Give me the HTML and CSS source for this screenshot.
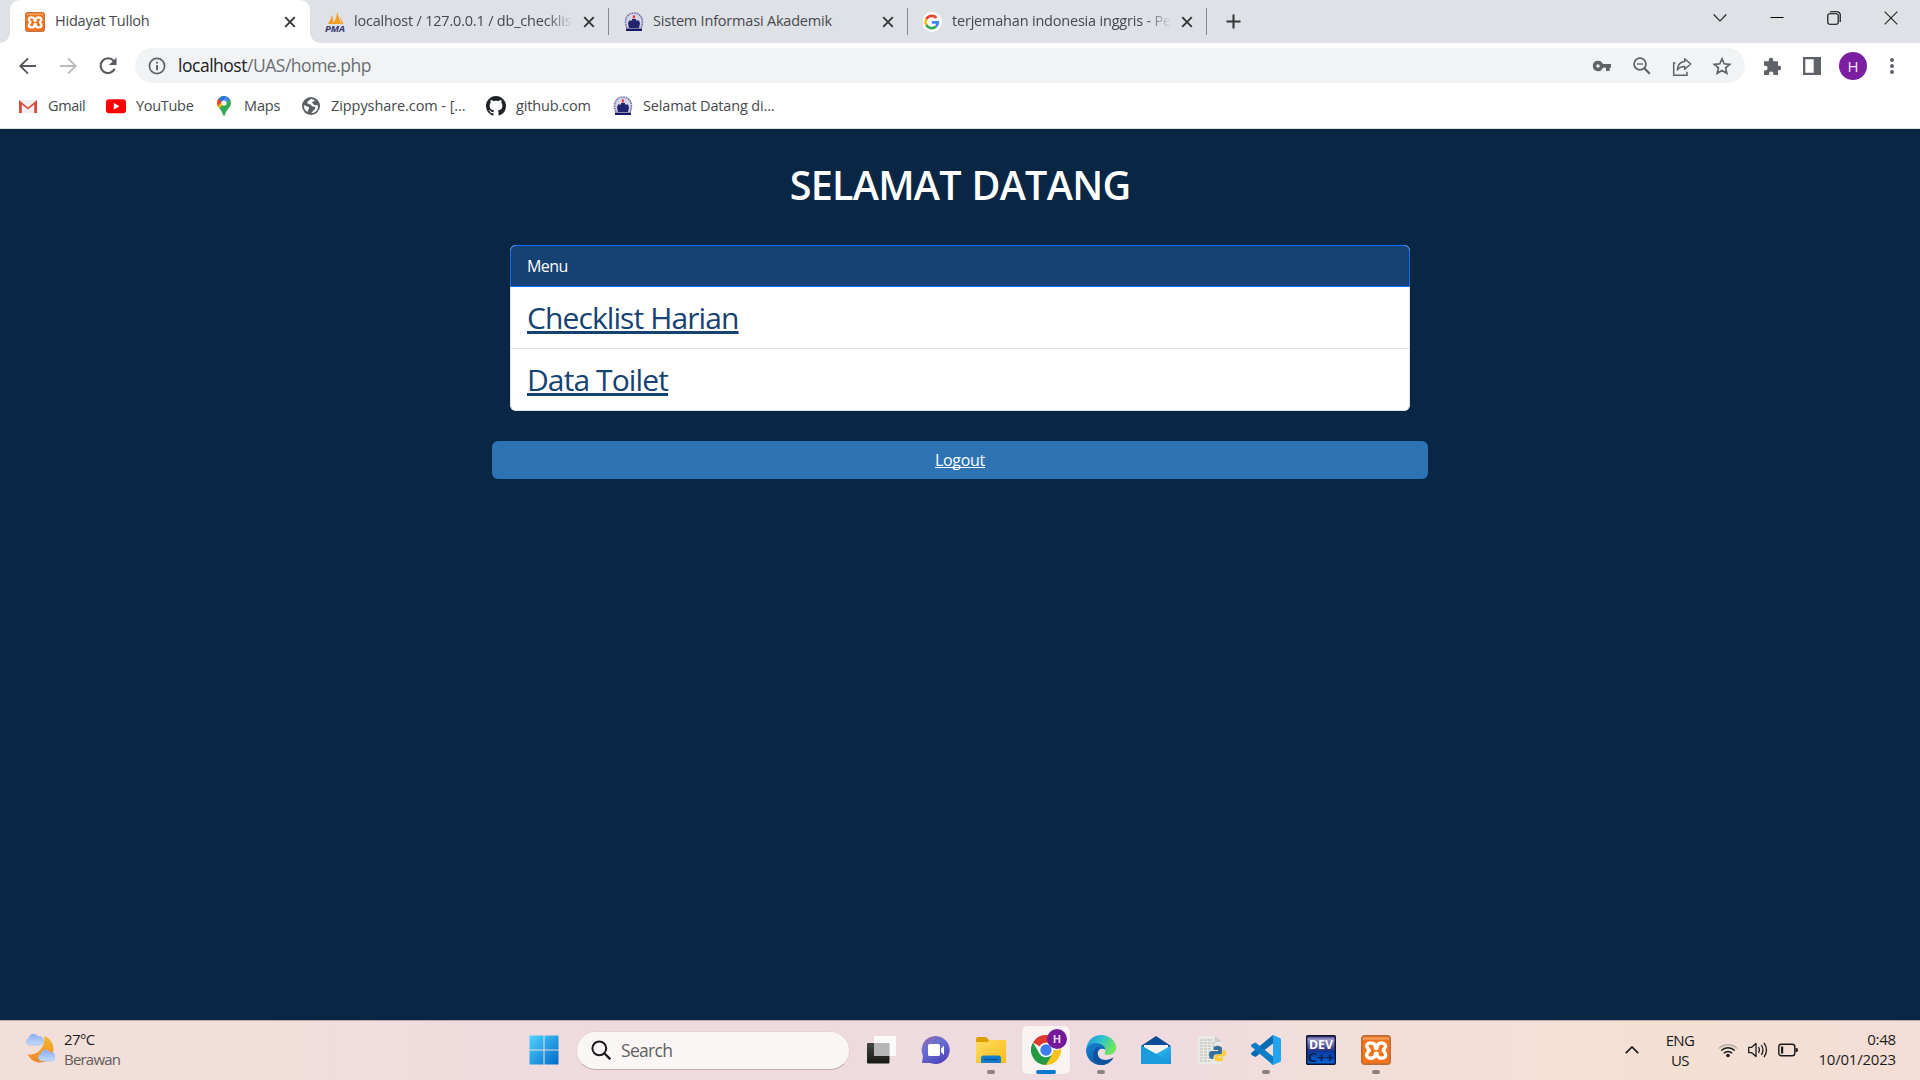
FILE: index.html
```html
<!DOCTYPE html>
<html lang="id">
<head>
<meta charset="utf-8">
<title>Hidayat Tulloh</title>
<link rel="stylesheet" href="styles.css">
</head>
<body>
<svg class="defs" width="0" height="0" aria-hidden="true">
  <defs>
    <linearGradient id="win" x1="0" y1="0" x2="1" y2="1"><stop offset="0" stop-color="#4fd4ff"/><stop offset="1" stop-color="#0069c8"/></linearGradient>
    <linearGradient id="moon" x1="0" y1="0" x2="0" y2="1"><stop offset="0" stop-color="#f4bb2f"/><stop offset="1" stop-color="#ee8424"/></linearGradient>
    <linearGradient id="cloud" x1="0" y1="0" x2="0" y2="1"><stop offset="0" stop-color="#86abef"/><stop offset="1" stop-color="#c4dcfc"/></linearGradient>
    <linearGradient id="tvb" x1="0" y1="0" x2="0" y2="1"><stop offset="0" stop-color="#444643"/><stop offset="1" stop-color="#171816"/></linearGradient>
    <linearGradient id="chat" x1="0" y1="0" x2=".6" y2="1"><stop offset="0" stop-color="#9a65a8"/><stop offset=".45" stop-color="#6570d2"/><stop offset="1" stop-color="#5147bd"/></linearGradient>
    <linearGradient id="fold" x1="0" y1="0" x2="1" y2="1"><stop offset="0" stop-color="#ffdc60"/><stop offset="1" stop-color="#fbbd18"/></linearGradient>
    <linearGradient id="edgetop" x1="0" y1="0" x2="1" y2=".4"><stop offset="0" stop-color="#1790dc"/><stop offset=".5" stop-color="#2fc0d2"/><stop offset="1" stop-color="#6be75c"/></linearGradient>
    <linearGradient id="edgelow" x1="0" y1="0" x2="1" y2="1"><stop offset="0" stop-color="#1583d6"/><stop offset="1" stop-color="#0b4a94"/></linearGradient>
    <linearGradient id="mail" x1="0" y1="0" x2="1" y2="1"><stop offset="0" stop-color="#3bd1f7"/><stop offset="1" stop-color="#168fd9"/></linearGradient>
    <linearGradient id="devbg" x1="0" y1="0" x2="0" y2="1"><stop offset="0" stop-color="#24215f"/><stop offset=".12" stop-color="#9c99cf"/><stop offset=".5" stop-color="#32347c"/><stop offset=".56" stop-color="#073b9d"/><stop offset="1" stop-color="#0866dc"/></linearGradient>
    <symbol id="xampp" viewBox="0 0 30 30">
      <rect x=".7" y=".7" width="28.6" height="28.6" rx="3" fill="#f0741d" stroke="#b96b38" stroke-width="1.4"/>
      <path d="M2 2.4h26v2.2H2z" fill="#f6a05f"/>
      <path d="M10.500 8C6 7.700 5 10.500 6.300 12.500L8.300 15.300 6.300 18.200C4.700 21 6.500 23.300 10 23.200c3.700 0 4.500-2.200 4.500-5h1.500c0 2.800.8 5 4.500 5 3.500 0 5.200-2.200 3.700-5L22.200 15.300l2-2.800C25.300 10.500 24 8 20 8c-3.300 0-4 2.200-4 5.200h-1.500C14.500 10.200 13.800 8 10.500 8z" fill="none" stroke="#fff" stroke-width="3.400" stroke-linejoin="round"/>
    </symbol>
    <symbol id="ship" viewBox="0 0 20 20">
      <path d="M3 16C-1 7 4 1 10 1s11 6 7 15" fill="#d5d6e7" stroke="#7d7ea9" stroke-width="1.700" stroke-dasharray="1.800 .7"/>
      <path d="M5 8.500h3V7h4v1.500h3l1 3-1 4.500H5l-1-4.500z" fill="#23246e"/>
      <path d="M2 16.500h16V19H2z" fill="#151769"/>
      <path d="M10 2.500l1.200 2.200L10 7.500 8.500 5z" fill="#e33"/>
    </symbol>
    <symbol id="close" viewBox="0 0 12 12"><path d="M1.200 1.200l9.600 9.600M10.800 1.200L1.200 10.800" stroke="#34373a" stroke-width="1.900"/></symbol>
    <symbol id="arrow" viewBox="0 0 20 20"><path d="M18 10H3M10 2.300L2.300 10l7.700 7.700" fill="none" stroke="currentColor" stroke-width="1.900"/></symbol>
  </defs>
</svg>

<div class="screen">
  <header class="tabstrip">
    <div class="tab tab-active">
      <svg class="favicon"><use href="#xampp"/></svg>
      <span class="tab-title">Hidayat Tulloh</span>
      <svg class="tab-close"><use href="#close"/></svg>
    </div>
    <div class="tab">
      <svg class="favicon" viewBox="0 0 20 20"><path d="M3 12Q6 7 7 3l2 9zM8 12Q12 6 12 0l4 12zM14.500 4l4 8h-2z" fill="#f89c1c"/><text class="pma" x="0" y="19.500" textLength="20" lengthAdjust="spacingAndGlyphs">PMA</text></svg>
      <span class="tab-title fade">localhost / 127.0.0.1 / db_checklist</span>
      <svg class="tab-close"><use href="#close"/></svg>
    </div>
    <div class="tab">
      <svg class="favicon"><use href="#ship"/></svg>
      <span class="tab-title">Sistem Informasi Akademik</span>
      <svg class="tab-close"><use href="#close"/></svg>
    </div>
    <div class="tab">
      <svg class="favicon" viewBox="0 0 20 20"><circle cx="9" cy="10" r="10" fill="#fff"/><g transform="translate(-1.200)" fill="none" stroke-width="2.700"><path d="M14.600 5.900A6.200 6.200 0 0 0 4.500 7.200" stroke="#ea4335"/><path d="M4.500 7.200a6.200 6.200 0 0 0 0 5.600" stroke="#fbbc05"/><path d="M4.500 12.800a6.200 6.200 0 0 0 9.700 1.700" stroke="#34a853"/><path d="M14.200 14.500A6.100 6.100 0 0 0 16.100 10.300H10" stroke="#4285f4"/></g></svg>
      <span class="tab-title fade">terjemahan indonesia inggris - Pe</span>
      <svg class="tab-close"><use href="#close"/></svg>
    </div>
    <svg class="newtab" viewBox="0 0 16 16"><path d="M8 .5v15M.5 8h15" stroke="#333639" stroke-width="2.200"/></svg>
    <div class="window-buttons">
      <svg viewBox="0 0 14 14"><path d="M.7 3.500L7 10l6.300-6.500" fill="none" stroke="#222" stroke-width="1.100"/></svg>
      <svg viewBox="0 0 14 14"><path d="M.5 6.500h13" stroke="#000" stroke-width="1"/></svg>
      <svg viewBox="0 0 14 14"><g fill="none" stroke="#000" stroke-width="1.100"><rect x=".8" y="2.800" width="10.400" height="10.400" rx="1.800"/><path d="M3 .8h7.400a2.800 2.800 0 0 1 2.800 2.800V11"/></g></svg>
      <svg viewBox="0 0 14 14"><path d="M.7.7l12.600 12.600M13.300.7L.7 13.300" stroke="#222" stroke-width="1.100"/></svg>
    </div>
  </header>

  <div class="toolbar">
    <svg class="nav"><use href="#arrow"/></svg>
    <svg class="nav nav-forward"><use href="#arrow"/></svg>
    <svg class="nav" viewBox="0 0 20 20"><path d="M16.700 12.800A7.400 7.400 0 1 1 15.700 5" fill="none" stroke="#55595d" stroke-width="2.100"/><path d="M18.500 1.500v7.500H11z" fill="#55595d"/></svg>
    <div class="omnibox">
      <svg class="info" viewBox="0 0 18 18"><circle cx="9" cy="9" r="7.600" fill="none" stroke="#5f6368" stroke-width="1.700"/><path d="M9 8v5.200M9 4.700v1.900" stroke="#5f6368" stroke-width="1.900"/></svg>
      <span class="url"><span class="host">localhost</span>/UAS/home.php</span>
      <div class="omni-actions">
        <svg viewBox="0 0 20 20"><path d="M6 4.700a5.200 5.200 0 0 1 4.900 3.400H19v3.600h-1.300v3.200H14v-3.200h-3.100A5.200 5.200 0 1 1 6 4.700zm0 3.500a1.700 1.700 0 1 0 0 3.500 1.700 1.700 0 0 0 0-3.500z" fill="#5f6368" fill-rule="evenodd"/></svg>
        <svg viewBox="0 0 20 20"><g fill="none" stroke="#5f6368"><circle cx="8" cy="8" r="5.900" stroke-width="1.800"/><path d="M12.300 12.300l5.500 5.500" stroke-width="2.200"/><path d="M5 8h6" stroke-width="1.400"/></g></svg>
        <svg viewBox="0 0 20 20"><g fill="none" stroke="#5f6368" stroke-width="1.500"><path d="M3.500 7H1.700v12.200H15v-3.500"/><path d="M12.700 2.800l6 5.200-6 5.200V10.500c-4 0-5.700 1-7.400 3.500C5.700 9.500 8 6 12.700 5.600z" stroke-linejoin="round"/></g></svg>
        <svg viewBox="0 0 20 20"><path d="M10 2.800l2.200 5 5.500.5-4.100 3.600 1.200 5.400-4.800-2.900-4.800 2.900 1.200-5.400-4.100-3.600 5.500-.5z" fill="none" stroke="#5f6368" stroke-width="1.700"/></svg>
      </div>
    </div>
    <div class="extensions">
      <svg viewBox="0 0 20 20"><path d="M2 5.200h4.800V4a2.200 2.200 0 0 1 4.400 0v1.200H16v4.600h1a2.100 2.100 0 0 1 0 4.400h-1V19h-4.600v-1.200a2.200 2.200 0 0 0-4.400 0V19H2v-4.600h1.300a2.300 2.300 0 0 0 0-4.600H2z" fill="#5f6368"/></svg>
      <svg viewBox="0 0 20 20"><path d="M1 1h18v18H1zM3.300 3.300v13.400h8.400V3.300z" fill="#5f6368" fill-rule="evenodd"/></svg>
      <span class="avatar">H</span>
      <svg viewBox="0 0 20 20"><g fill="#5f6368"><circle cx="10" cy="4" r="2"/><circle cx="10" cy="10" r="2"/><circle cx="10" cy="16" r="2"/></g></svg>
    </div>
  </div>

  <nav class="bookmarks">
    <span class="bm bm-gmail"><svg viewBox="0 0 20 20"><path d="M2 4h16v13H2z" fill="#f1f1f1"/><path d="M1 17V4l9 7.500L19 4v13h-2.800V8.500L10 13.500 3.800 8.500V17z" fill="#d54c3f"/></svg>Gmail</span>
    <span class="bm bm-youtube"><svg viewBox="0 0 20 20"><rect y="3.200" width="20" height="14" rx="3.200" fill="#f00"/><path d="M7.800 7l5.700 3.200-5.700 3.200z" fill="#fff"/></svg>YouTube</span>
    <span class="bm bm-maps"><svg viewBox="0 0 20 20"><path d="M3 7a7 7 0 0 1 14 0c0 5-5.500 6.500-6 12.500H9C8.500 13.500 3 12 3 7z" fill="#34a853"/><path d="M3 7.500C3 9.500 4 11 5.200 12.300L14.500 2A7 7 0 0 0 3 7.500z" fill="#fbbc04"/><path d="M4.500 3L8 6l4.200-5.500A7 7 0 0 0 4.500 3z" fill="#1a73e8"/><path d="M4.600 2.800L8 6 4 10C2.700 7.500 3 4.800 4.600 2.800z" fill="#ea4335"/><path d="M8 6L12.300.5A7 7 0 0 1 15.700 3L11 8z" fill="#4285f4"/><circle cx="10" cy="7" r="2.600" fill="#fff"/></svg>Maps</span>
    <span class="bm bm-zippy"><svg viewBox="0 0 20 20"><circle cx="10" cy="10" r="9" fill="#5c6063"/><path d="M10 2.800c-1 2-3.500 1.800-3.700 4 0 1.600 3.200 1 4 2.500.5 1.800 4 1 4.200 2.700-.5 1.800-3 2.500-3.500 4.500l-1 .8c4 0 7-3 7.200-7-.8-1.500-2-1.500-3-1-2.200-.3-2-2.200-3.300-2.500 1.200-1.600 2.800-.8 2.700-2.700zM2.800 9.500c2-.5 3.200 1 5.200 1.500.2 2-.7 2.200-1.500 5-2.200-1.300-3.800-3.500-3.700-6.500z" fill="#fff"/></svg>Zippyshare.com - [...</span>
    <span class="bm bm-github"><svg viewBox="0 0 16 16"><path fill="#1f2328" d="M8 0C3.580 0 0 3.580 0 8c0 3.540 2.290 6.530 5.470 7.590.4.070.55-.17.55-.38 0-.19-.01-.82-.01-1.490-2.010.37-2.530-.49-2.690-.94-.09-.23-.48-.94-.82-1.130-.28-.15-.68-.52-.01-.53.63-.01 1.080.58 1.230.82.720 1.210 1.870.87 2.330.66.070-.52.28-.87.510-1.070-1.780-.2-3.640-.89-3.640-3.950 0-.87.310-1.590.82-2.150-.08-.2-.36-1.020.08-2.120 0 0 .67-.21 2.200.82.640-.18 1.320-.27 2-.27s1.360.09 2 .27c1.530-1.040 2.200-.82 2.200-.82.440 1.100.16 1.920.08 2.120.51.560.82 1.270.82 2.150 0 3.070-1.870 3.750-3.650 3.950.29.250.54.730.54 1.480 0 1.070-.01 1.930-.01 2.200 0 .21.15.46.55.38A8.010 8.010 0 0 0 16 8c0-4.420-3.580-8-8-8z"/></svg>github.com</span>
    <span class="bm"><svg><use href="#ship"/></svg>Selamat Datang di...</span>
  </nav>

  <main class="page">
    <h1 class="heading">SELAMAT DATANG</h1>
    <section class="card">
      <div class="card-header">Menu</div>
      <ul class="menu">
        <li><a href="#">Checklist Harian</a></li>
        <li><a href="#">Data Toilet</a></li>
      </ul>
    </section>
    <div class="logout"><a href="#">Logout</a></div>
  </main>

  <footer class="taskbar">
    <div class="weather">
      <svg viewBox="0 0 30 30"><path d="M19 3a13.500 13.500 0 1 1-16.500 18C12 24 21 14 19 3z" fill="url(#moon)"/><path d="M4 12a3.700 3.700 0 0 1 0-7 4.800 4.800 0 0 1 9-1.500 4.300 4.300 0 0 1 2 8.500z" fill="url(#cloud)" stroke="#9dbbee" stroke-width=".7"/><path d="M16 28a3.700 3.700 0 0 1 0-7 4.800 4.800 0 0 1 9-1.500 4.300 4.300 0 0 1 2 8.500z" fill="url(#cloud)" stroke="#9dbbee" stroke-width=".7"/></svg>
      <div class="weather-text"><span class="temp">27°C</span><span class="cond">Berawan</span></div>
    </div>
    <div class="apps">
      <span class="app start"><svg viewBox="0 0 30 30"><path d="M.5.500h14v14H.5zM15.500.500h14v14h-14zM.5 15.500h14v14H.5zM15.500 15.500h14v14h-14z" fill="url(#win)"/></svg></span>
      <div class="search"><svg viewBox="0 0 20 20"><circle cx="8.300" cy="8.300" r="6.900" fill="none" stroke="#1a1a1a" stroke-width="2"/><path d="M13.300 13.300l6 6" stroke="#1a1a1a" stroke-width="2.300"/></svg>Search</div>
      <span class="app"><svg viewBox="0 0 30 30"><rect x="1" y="8" width="22.500" height="20.500" rx="1" fill="url(#tvb)"/><rect x="8" y="1" width="22" height="20" rx="1" fill="#fff" fill-opacity=".82"/><path d="M8 8h15.500v13H8z" fill="#b5b6b5"/></svg></span>
      <span class="app"><svg viewBox="0 0 30 30"><path d="M15 1a14 14 0 1 1-5.500 27H1l1-7A14 14 0 0 1 15 1z" fill="url(#chat)"/><rect x="7" y="9" width="12" height="12" rx="1.500" fill="#fff"/><path d="M20 13.500l3-3v9.500l-3-3z" fill="#fff"/></svg></span>
      <span class="app running"><svg viewBox="0 0 30 30"><path d="M0 4q0-2 2-2h8l3 3v5H0z" fill="#dba000"/><path d="M0 7h11l3-2h16v23H0z" fill="url(#fold)"/><path d="M5 28v-5q0-2.500 2.500-2.500h15Q25 20.500 25 23v5z" fill="#137ccb"/><path d="M8 24.500h14" stroke="#0b5390" stroke-width="1.300"/></svg></span>
      <span class="app running active"><svg viewBox="0 0 30 30"><path d="M15 15L2 7.500A15 15 0 0 1 28 7.500H15z" fill="#e0392e"/><path d="M15 15H28.500L28 7.500A15 15 0 0 1 15 30z" fill="#fcc31e"/><path d="M2 7.500L8.700 18.700 15 22l6.500-3.300L15 30A15 15 0 0 1 2 7.500z" fill="#249a45"/><path d="M15 7.500h13l.7 2H15z" fill="#e0392e"/><circle cx="15" cy="15" r="7.300" fill="#fff"/><circle cx="15" cy="15" r="5.700" fill="#3b7df0"/></svg><b class="badge">H</b></span>
      <span class="app running"><svg viewBox="0 0 30 30"><path d="M0 15C1 5 8 0 15 0c10 0 16 8 15 14-1 5-6 6.500-11 5.500-1-.8.500-1.500.5-4C19.500 11 14 8 9 8.500 4 9 1.500 12 0 15z" fill="url(#edgetop)"/><path d="M0 15c1-4 5-7.500 10-7 5 .3 9 3 9.500 6.500-8-3.500-10 6-5.500 9.500 5 4 11 0 13.500-1.500C24 28 19 30 15 30 6 30 0 23 0 15z" fill="url(#edgelow)"/><path d="M11 12c-7 7-4 17 4.500 18 5 0 9.500-2.500 12-7.500C20 27 12 25 11.500 18c-.2-2.500.8-4 2-5z" fill="#10529e"/></svg></span>
      <span class="app"><svg viewBox="0 0 30 30"><path d="M0 11L15 1l15 10v4H0z" fill="#0a4d96"/><path d="M3 10h24v8L15 22 3 18z" fill="#f4f4f4"/><path d="M0 10.500L15 19l15-8.500V29H0z" fill="url(#mail)"/><path d="M0 29L15 19 0 10.500z" fill="#1b9cda"/><path d="M0 29L15 19l15 10z" fill="#199bdd"/></svg></span>
      <span class="app"><svg viewBox="0 0 30 30"><path d="M2 1h17l7 6v22H2z" fill="#e9e9e6"/><path d="M19 1v6h7z" fill="#c9c9c9"/><path d="M4 5h13M4 8h15M4 11h19M4 14h12M4 17h11M4 20h10M4 23h11M4 26h10" stroke="#b8b8b5" stroke-width="1.100" stroke-dasharray="3 1"/><path d="M21.500 11c-3.500 0-4 1-4 2.500V15h4.500v1h-6c-2.500 0-3 2-3 4s.8 4 3 4h1.500v-2c0-1.500 1-2.500 2.500-2.500h4c1.300 0 2-1 2-2v-4c0-1.500-1-2.500-4.500-2.500z" fill="#37709f"/><path d="M23 26.500c3.500 0 4-1 4-2.500v-1.500h-4.500v-1h5c2 0 2.500-1.500 2.500-3.500s-.8-3-2.500-3h-1v2c0 1.500-1 2.500-2.500 2.500h-3.500c-1.300 0-2 1-2 2V24c0 1.500 1 2.500 4.500 2.500z" fill="#fccb35"/></svg></span>
      <span class="app running"><svg viewBox="0 0 30 30"><path d="M22 0v8.500L4.500 22 .5 20q-1-1.500.3-2.500z" fill="#0a6bb5"/><path d="M22 30v-8.500L4.500 7.500.5 9.500q-1 1.500.3 2.500z" fill="#0d7dc8"/><path d="M22 0l7 3q1 .5 1 1.500v21q0 1-1 1.500l-7 3q-1 0-1.500-1 1.500 0 1.500-2V3q0-2-1.500-2z" fill="#25a3ef"/></svg></span>
      <span class="app"><svg viewBox="0 0 30 30"><rect x=".7" y=".7" width="28.600" height="28.600" rx="1" fill="url(#devbg)" stroke="#0b1430" stroke-width="1.400"/><text class="cpp" x="1.500" y="26.800" textLength="27" lengthAdjust="spacingAndGlyphs">C++</text><text class="dev" x="3" y="13.800" textLength="24" lengthAdjust="spacingAndGlyphs">DEV</text></svg></span>
      <span class="app running"><svg><use href="#xampp"/></svg></span>
    </div>
    <div class="tray">
      <svg class="tray-chevron" viewBox="0 0 14 8"><path d="M.8 7.200L7 1l6.200 6.200" fill="none" stroke="#1b1b1b" stroke-width="1.700"/></svg>
      <div class="lang"><span>ENG</span><span>US</span></div>
      <div class="status">
        <svg viewBox="0 0 20 20"><g fill="none" stroke="#1b1b1b" stroke-width="1.500"><path d="M.8 8.500a13 13 0 0 1 18.400 0" stroke="#b9aba4"/><path d="M3.300 10.500a9.600 9.600 0 0 1 13.400 0M5.800 13.200a6 6 0 0 1 8.400 0"/></g><circle cx="10" cy="15.500" r="1.800" fill="#1b1b1b"/></svg>
        <svg viewBox="0 0 20 20"><g fill="none" stroke="#1b1b1b" stroke-width="1.300"><path d="M.7 7.300h3L8 3.500v13l-4.300-3.800h-3z" stroke-linejoin="round"/><path d="M10.500 7.200q1.800 2.800 0 5.600M13.300 5q3.400 5 0 10M16 2.800q5 7.200 0 14.400"/></g></svg>
        <svg viewBox="0 0 20 20"><rect x=".8" y="4.300" width="16" height="11.400" rx="2.500" fill="none" stroke="#1b1b1b" stroke-width="1.400"/><path d="M3 6.500h2.200v7H3zM17.500 8h1q1.500 0 1.500 2t-1.500 2h-1z" fill="#1b1b1b"/></svg>
      </div>
      <div class="clock"><span>0:48</span><span>10/01/2023</span></div>
    </div>
  </footer>
</div>
</body>
</html>
```
FILE: styles.css
```css
* { box-sizing: border-box; }
body { margin: 0; font-family: "Open Sans", "Noto Sans", sans-serif; }
svg { display: block; flex: none; }
.defs { position: absolute; }
.screen { width: 1920px; height: 1080px; display: flex; flex-direction: column; overflow: hidden; background: #092645; }

/* Tab strip */
.tabstrip { height: 43px; display: flex; padding-left: 10px; background: #dee1e6; }
.tab { position: relative; width: 299px; height: 43px; display: flex; align-items: center; padding: 0 14px 0 15px; font-size: 14.5px; letter-spacing: -.2px; color: #45494d; }
.tab-active { width: 300px; background: #fff; border-radius: 10px 10px 0 0; }
.tab-active::before, .tab-active::after { content: ""; position: absolute; bottom: 0; width: 10px; height: 10px; }
.tab-active::before { left: -10px; background: radial-gradient(circle at 0 0, transparent 9.5px, #fff 10px); }
.tab-active::after { right: -10px; background: radial-gradient(circle at 100% 0, transparent 9.5px, #fff 10px); }
.tab:not(.tab-active) { border-right: 1px solid transparent; border-image: linear-gradient(transparent 9px, #85888d 9px, #85888d 34px, transparent 34px) 1; }
.favicon { width: 20px; height: 20px; margin-right: 9px; }
.tab-active .favicon { margin-right: 10px; }
.tab-title { flex: 1; overflow: hidden; white-space: nowrap; margin-right: 7px; line-height: 24px; padding-bottom: 2px; }
.fade { -webkit-mask-image: linear-gradient(90deg, #000 87%, transparent 99%); mask-image: linear-gradient(90deg, #000 87%, transparent 99%); }
.tab-close { width: 12px; height: 12px; margin-right: -1px; }
.tab-active .tab-close { margin-right: 0; }
.pma { font: italic bold 8px "Open Sans", sans-serif; letter-spacing: 0; fill: #373873; }
.newtab { width: 15px; height: 15px; margin: 14px 0 0 19px; }
.window-buttons { display: flex; gap: 43px; margin: 11px 22px 0 auto; }
.window-buttons svg { width: 14px; height: 14px; }

/* Address row */
.toolbar { height: 45px; padding: 5px 18px; display: flex; align-items: center; background: #fff; }
.nav { width: 20px; height: 20px; margin-right: 20px; color: #55595d; }
.nav-forward { color: #b9bbbe; transform: scaleX(-1); }
.omnibox { flex: 1; height: 35px; margin-left: -3px; display: flex; align-items: center; padding: 0 13px; border-radius: 18px; background: #f1f3f4; }
.info { width: 18px; height: 18px; }
.url { margin-left: 12px; padding-bottom: 1px; font-size: 17.5px; letter-spacing: -.48px; color: #6a6e72; }
.host { color: #202124; }
.omni-actions { display: flex; gap: 20px; margin-left: auto; }
.omni-actions svg, .extensions svg { width: 20px; height: 20px; }
.extensions { display: flex; align-items: center; gap: 20px; margin-left: 17px; }
.avatar { width: 28px; height: 28px; margin: 0 -5px 0 -3px; border-radius: 50%; background: #7b1fa2; color: #f2e5f7; font-size: 15px; line-height: 28px; text-align: center; }

/* Bookmarks */
.bookmarks { height: 41px; display: flex; align-items: center; padding: 0 18px 4px; background: #fff; border-bottom: 1px solid #dcdee1; font-size: 14.5px; letter-spacing: -.15px; color: #45494d; }
.bm { display: flex; align-items: center; gap: 10px; white-space: nowrap; line-height: 20px; }
.bm svg { width: 20px; height: 20px; }
.bm-gmail { width: 88px; letter-spacing: -.4px; }
.bm-youtube { width: 108px; letter-spacing: -.3px; }
.bm-maps { width: 87px; }
.bm-zippy { width: 185px; letter-spacing: -.08px; }
.bm-github { width: 127px; }

/* Web page */
.page { flex: 1; display: flex; flex-direction: column; align-items: center; padding-top: 32px; }
.heading { margin: 0; font-size: 39.5px; line-height: 48px; font-weight: 600; letter-spacing: -.7px; word-spacing: 1px; color: #fff; }
.card { width: 900px; margin-top: 36px; border-radius: 6px; background: #fff; overflow: hidden; }
.card-header { height: 42px; padding-left: 16px; line-height: 41px; font-size: 16px; letter-spacing: -.6px; color: #fff; background: #154272; border: 1px solid #0d6efd; border-radius: 6px 6px 0 0; }
.menu { margin: 0; padding: 0; list-style: none; border: 1px solid #dee2e6; border-top: 0; border-radius: 0 0 6px 6px; }
.menu li { height: 61px; padding-left: 16px; line-height: 61px; font-size: 30px; letter-spacing: -.9px; }
.menu li + li { border-top: 1px solid #dee2e6; height: 62px; }
.menu a { color: #154272; text-decoration-thickness: 3px; text-underline-offset: 2px; text-decoration-skip-ink: none; }
.logout { width: 936px; height: 38px; margin-top: 30px; border-radius: 6px; background: #2d73b3; line-height: 39px; text-align: center; font-size: 16px; letter-spacing: -.3px; }
.logout a { color: #fff; text-decoration-thickness: 1px; text-underline-offset: 1px; text-decoration-skip-ink: none; }

/* Taskbar */
.taskbar { height: 60px; display: flex; align-items: stretch; border-top: 1px solid #b9acae; color: #1b1b1b; font-size: 15px; background: linear-gradient(90deg, #f3dfd9 0, #f1dedb 15%, #efdbdf 30%, #efdbdf 60%, #f3dfd8 72%, #f4e0d3 86%, #f3ddd5 100%); }
.weather { width: 517px; display: flex; align-items: flex-start; padding: 12px 0 0 25px; }
.weather svg { width: 30px; height: 30px; }
.weather-text { display: flex; flex-direction: column; margin: -4px 0 0 9px; line-height: 20px; }
.temp { letter-spacing: -.6px; }
.cond { color: #625b59; letter-spacing: -.8px; }
.apps { display: flex; align-items: center; padding-bottom: 1px; }
.app { position: relative; width: 48px; height: 48px; margin: 0 3.5px; padding: 9px; border-radius: 5px; }
.app svg { width: 30px; height: 30px; }
.start { margin: 0 8px 0 3px; }
.search { width: 274px; height: 39px; margin-right: 3.5px; display: flex; align-items: center; gap: 10px; padding-left: 14px; border-radius: 20px; border: 1px solid #e5d3d5; border-bottom-color: #bfaeb1; background: #fbf6f6; color: #625f5f; font-size: 17.5px; letter-spacing: -.7px; }
.search svg { width: 20px; height: 20px; }
.running::after { content: ""; position: absolute; left: 20px; bottom: 0; width: 8px; height: 4px; border-radius: 2px; background: #8b8280; }
.active { background: #faf3f3; box-shadow: 0 0 1px #ceb8ba; }
.active::after { left: 14px; width: 20px; background: #0a7ad1; }
.badge { position: absolute; left: 25px; top: 3px; width: 20px; height: 20px; border-radius: 50%; background: #74189c; color: #e9d5ef; font-size: 11px; line-height: 20px; text-align: center; }
.dev { font: bold 11.5px "Open Sans", sans-serif; fill: #fff; }
.cpp { font: bold 12.5px "Open Sans", sans-serif; fill: #061d54; }
.tray { display: flex; margin-left: auto; padding-right: 24px; }
.tray-chevron { width: 14px; height: 8px; margin: 25px 24px 0 0; }
.lang, .clock { display: flex; flex-direction: column; line-height: 20px; }
.lang { width: 34px; padding-top: 9px; text-align: center; letter-spacing: -.6px; }
.status { display: flex; gap: 10px; margin: 19px 0 0 21px; }
.status svg { width: 20px; height: 20px; }
.clock { width: 98px; padding-top: 8px; text-align: right; letter-spacing: -.2px; }
```
